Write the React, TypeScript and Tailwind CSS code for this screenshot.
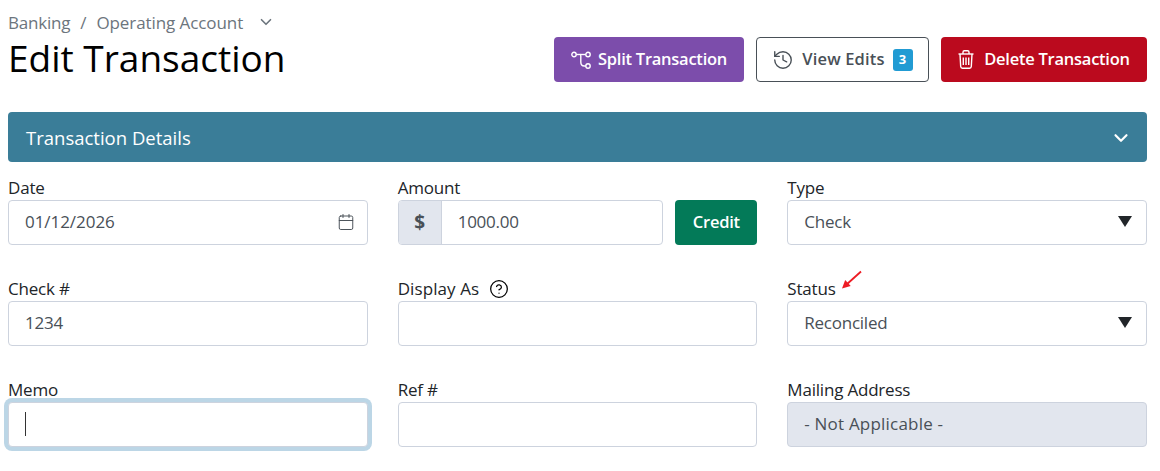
import { Calendar, ChevronDown, CircleHelp, History } from "lucide-react";

const font = "font-['Open_Sans','Noto_Sans',sans-serif]";
const inputBox = "h-[45px] w-full rounded-[4px] border border-[#cdd3de] flex items-center pl-4 pr-4 pb-[1px] text-[17px] tracking-[-0.25px] text-[#495057]";

function Label({ children }: { children: React.ReactNode }) {
  return <div className="h-6 text-[17px] leading-6 tracking-[-0.2px] text-[#212529]">{children}</div>;
}

function SelectBox({ value }: { value: string }) {
  return (
    <div className={inputBox + " justify-between bg-white"}>
      <span>{value}</span>
      <svg width="14" height="11" viewBox="0 0 14 11" className="mb-[2px] -mr-[2px]">
        <path d="M0 0h14L7 11z" fill="#212529" />
      </svg>
    </div>
  );
}

function SplitIcon() {
  return (
    <svg width="20" height="18" viewBox="0 0 20 18" fill="none" stroke="currentColor" strokeWidth="1.4">
      <circle cx="3" cy="3.500" r="2.200" />
      <circle cx="17" cy="3.500" r="2.200" />
      <circle cx="17" cy="15" r="2.200" />
      <path d="M5.200 3.500h9.600" />
      <path d="M9 3.500c.4 0 .8.500.8 1.500v6c0 2.500 1.500 4 3.500 4h1.500" />
    </svg>
  );
}

function TrashIcon() {
  return (
    <svg width="16" height="19" viewBox="0 0 16 19" fill="none" stroke="currentColor" strokeWidth="1.4">
      <path d="M0.500 4h15" />
      <path d="M5 4V2.200C5 1.300 5.500.8 6.300.8h3.400c.8 0 1.300.5 1.300 1.400V4" />
      <path d="M2 4l.7 12.500c.1 1 .7 1.700 1.700 1.700h7.200c1 0 1.600-.7 1.700-1.700L14 4" />
      <path d="M5.300 7.500v7.500M8 7.500v7.500M10.700 7.500v7.500" />
    </svg>
  );
}

export default function App() {
  return (
    <div className={font + " h-[471px] w-[1160px] overflow-hidden bg-white pl-2 pr-[13px]"}>
      <div className="flex h-[112px] items-start justify-between">
        <div className="pt-[11px]">
          <div className="flex h-6 items-center text-[17px] tracking-[-0.2px] text-[#6c757d]">
            <span>Banking</span>
            <span className="mx-[10px]">/</span>
            <span className="tracking-[-0.08px]">Operating Account</span>
            <ChevronDown size={18} strokeWidth={2.2} className="ml-[14px] mb-[3px]" />
          </div>
          <h1 className="text-[37px] leading-[45px] text-black">Edit Transaction</h1>
        </div>
        <div className="flex gap-3 pt-[37px]">
          <button className="flex h-[45px] w-[190px] items-center justify-center gap-[7px] rounded-[4px] bg-[#7c4dab] text-[16.500px] font-semibold tracking-[-0.25px] text-white">
            <SplitIcon />
            Split Transaction
          </button>
          <button className="flex h-[45px] w-[173px] items-center justify-center gap-[8px] rounded-[4px] border border-[#495057] bg-white text-[16.500px] font-semibold tracking-[0.15px] text-[#495057]">
            <History size={22} strokeWidth={1.5} />
            View Edits
            <span className="flex h-[22px] w-[20px] items-center justify-center rounded-[3px] bg-[#219bd3] text-[13px] font-bold text-white">3</span>
          </button>
          <button className="flex h-[45px] w-[206px] items-center justify-center gap-[10px] rounded-[4px] bg-[#bb0a1e] text-[16.500px] font-semibold tracking-[-0.25px] text-white">
            <TrashIcon />
            Delete Transaction
          </button>
        </div>
      </div>

      <div className="flex h-[50px] items-center justify-between rounded-[4px] bg-[#3a7d98] pt-[1px] pl-[18px] pr-[15px] text-[18.500px] text-white">
        <span>Transaction Details</span>
        <ChevronDown size={22} strokeWidth={2.4} />
      </div>

      <div className="mt-[14px] grid grid-cols-3 gap-x-[30px] gap-y-[32px]">
        <div>
          <Label>Date</Label>
          <div className={inputBox + " justify-between bg-white pr-[12px]"}>
            <span className="tracking-[-0.05px]">01/12/2026</span>
            <Calendar size={18} strokeWidth={1.3} />
          </div>
        </div>
        <div>
          <Label>Amount</Label>
          <div className="flex gap-3">
            <div className="flex h-[45px] flex-1 rounded-[4px] border border-[#cdd3de] bg-white text-[17px] tracking-[-0.25px] text-[#495057]">
              <div className="flex w-[43px] items-center justify-center rounded-l-[3px] border-r border-[#cdd3de] bg-[#e2e6ee] text-[19px] font-bold">$</div>
              <div className="flex items-center pb-[1px] pl-4">1000.00</div>
            </div>
            <button className="h-[45px] w-[82px] rounded-[4px] bg-[#037a58] text-[16.500px] font-semibold tracking-[-0.25px] text-white">Credit</button>
          </div>
        </div>
        <div>
          <Label>Type</Label>
          <SelectBox value="Check" />
        </div>

        <div>
          <Label>Check #</Label>
          <div className={inputBox + " bg-white"}>1234</div>
        </div>
        <div>
          <Label>
            <span className="flex items-center gap-[10px] tracking-[0.1px]">
              Display As
              <CircleHelp size={20} strokeWidth={1.5} className="text-black" />
            </span>
          </Label>
          <div className={inputBox + " bg-white"} />
        </div>
        <div className="relative">
          <Label>Status</Label>
          <svg width="22" height="20" viewBox="0 0 22 20" className="absolute left-[54px] top-[-7px]">
            <path d="M20 1.500 5 15" stroke="#ed1c24" strokeWidth="1.800" fill="none" />
            <path d="M1 18.500l3.200-8.500 5.500 6z" fill="#ed1c24" />
          </svg>
          <SelectBox value="Reconciled" />
        </div>

        <div>
          <Label>Memo</Label>
          <div className={inputBox + " border-[#7eb0cf] bg-white shadow-[0_0_0_4px_#bcd6e6]"}>
            <span className="h-[24px] w-px bg-[#333]" />
          </div>
        </div>
        <div>
          <Label>Ref #</Label>
          <div className={inputBox + " bg-white"} />
        </div>
        <div>
          <Label>Mailing Address</Label>
          <div className={inputBox + " bg-[#e2e6ee] tracking-[0.2px]"}>- Not Applicable -</div>
        </div>
      </div>
    </div>
  );
}
